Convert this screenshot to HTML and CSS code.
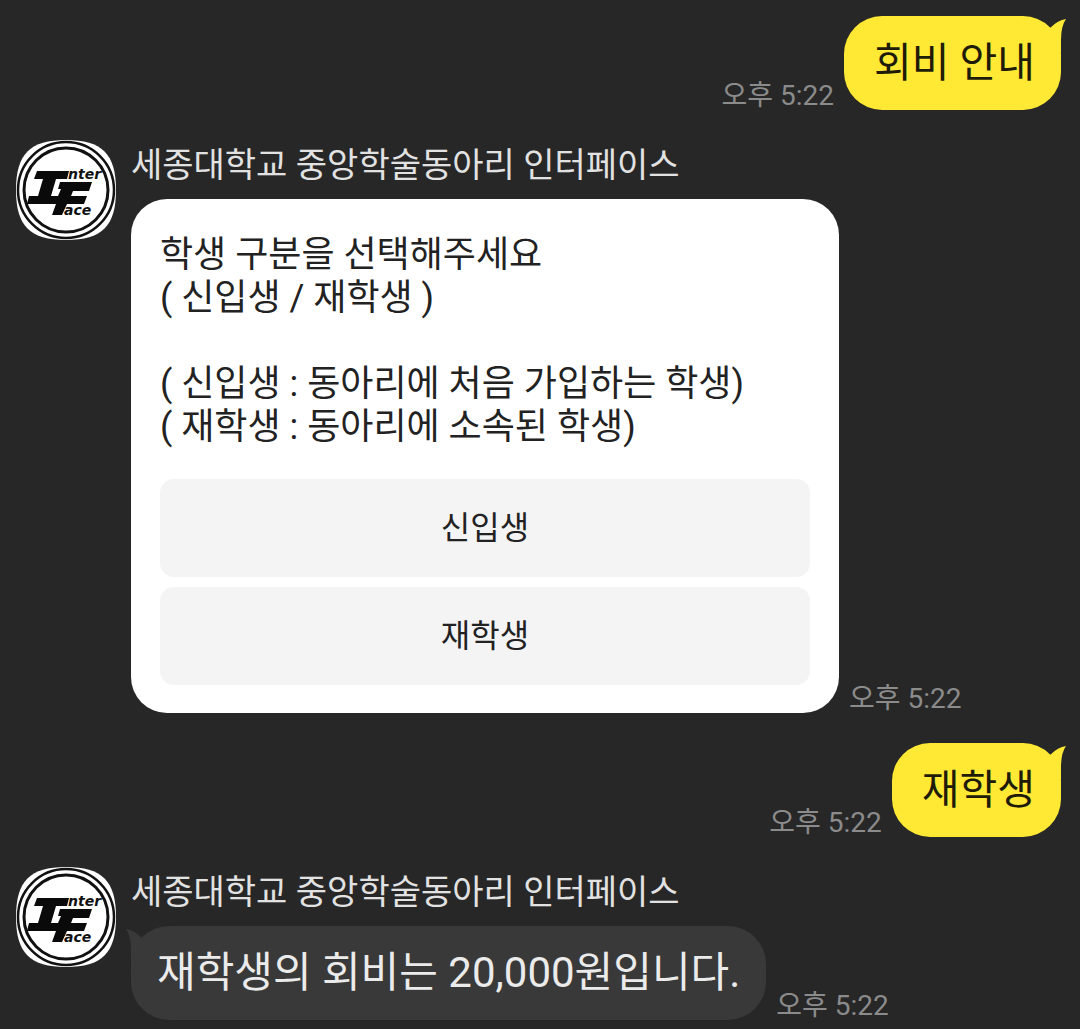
FILE: index.html
```html
<!DOCTYPE html>
<html lang="ko">
<head>
<meta charset="utf-8">
<meta name="viewport" content="width=device-width, initial-scale=1">
<title>세종대학교 중앙학술동아리 인터페이스</title>
<link rel="stylesheet" href="styles.css">
</head>
<body>
<svg class="defs" aria-hidden="true">
  <defs>
    <symbol id="logo" viewBox="0 0 100 100">
      <path d="M50 0C86 0 100 14 100 50S86 100 50 100 0 86 0 50 14 0 50 0Z" fill="#fff"/>
      <g fill="none" stroke="#111">
        <circle cx="50" cy="50" r="48" stroke-width="2.500"/>
        <circle cx="50" cy="50" r="42" stroke-width="3"/>
      </g>
      <path fill="#0a0a0a" d="M21 31H53L51 39H40L35 56H42L45 49H42L44 42H76L73 51H57L55 56H71L68 64H51L46 75H36L40 64H11L13 56H22L27 39H18Z"/>
      <g class="logo-text">
        <text x="52" y="39">nter</text>
        <text x="48" y="75">ace</text>
      </g>
    </symbol>
    <symbol id="tail" viewBox="0 0 24 36">
      <path d="M8 12Q16 4 24 3Q19 10 19 24V36H8Z"/>
    </symbol>
  </defs>
</svg>
<main class="chat">
  <section class="message mine">
    <time class="time">오후 5:22</time>
    <p class="bubble">회비 안내<svg class="tail" aria-hidden="true"><use href="#tail"/></svg></p>
  </section>

  <section class="message theirs">
    <svg class="avatar" aria-hidden="true"><use href="#logo"/></svg>
    <div class="content">
      <h2 class="name">세종대학교 중앙학술동아리 인터페이스</h2>
      <div class="line">
        <div class="card">
          <p class="card-text">학생 구분을 선택해주세요<br>( 신입생 / 재학생 )<br><br>( 신입생 : 동아리에 처음 가입하는 학생)<br>( 재학생 : 동아리에 소속된 학생)</p>
          <div class="choices">
            <button class="choice" type="button">신입생</button>
            <button class="choice" type="button">재학생</button>
          </div>
        </div>
        <time class="time">오후 5:22</time>
      </div>
    </div>
  </section>

  <section class="message mine">
    <time class="time">오후 5:22</time>
    <p class="bubble">재학생<svg class="tail" aria-hidden="true"><use href="#tail"/></svg></p>
  </section>

  <section class="message theirs">
    <svg class="avatar" aria-hidden="true"><use href="#logo"/></svg>
    <div class="content">
      <h2 class="name">세종대학교 중앙학술동아리 인터페이스</h2>
      <div class="line">
        <p class="bubble">재학생의 회비는 20,000원입니다.<svg class="tail" aria-hidden="true"><use href="#tail"/></svg></p>
        <time class="time">오후 5:22</time>
      </div>
    </div>
  </section>
</main>
</body>
</html>
```
FILE: styles.css
```css
* {
  box-sizing: border-box;
}

body {
  margin: 0;
  background: #272727;
  color: #e2e2e2;
  font-family: Roboto, "Noto Sans CJK KR", sans-serif;
}

h2,
p {
  margin: 0;
  font-weight: 400;
}

.defs {
  position: absolute;
  width: 0;
  height: 0;
}

.logo-text {
  fill: #111;
  font-family: "DejaVu Sans", sans-serif;
  font-size: 14px;
  font-style: italic;
  font-weight: 700;
}

.chat {
  display: flex;
  flex-direction: column;
  gap: 30px;
  padding: 16px 19px 8px 16px;
}

.message {
  display: flex;
}

.mine {
  justify-content: flex-end;
  align-items: flex-end;
  gap: 10px;
}

.theirs {
  align-items: flex-start;
  gap: 15px;
}

.content {
  flex: 1;
  min-width: 0;
}

.avatar {
  flex: none;
  width: 100px;
  height: 100px;
}

.name {
  margin-bottom: 9px;
  font-size: 34px;
  line-height: 50px;
}

.line {
  display: flex;
  align-items: flex-end;
  gap: 10px;
}

.time {
  flex: none;
  color: #8b8b8b;
  font-size: 28px;
  line-height: 28px;
}

.bubble {
  position: relative;
  border-radius: 38px;
  line-height: 64px;
}

.mine .bubble {
  padding: 15px 26px 15px 30px;
  background: #ffe934;
  color: #1e1c08;
  fill: #ffe934;
  font-size: 41px;
}

.theirs .bubble {
  padding: 15px 26px;
  background: #393939;
  color: #ebebeb;
  fill: #393939;
  font-size: 42px;
}

.tail {
  position: absolute;
  top: 0;
  right: -5px;
  width: 24px;
  height: 36px;
}

.theirs .tail {
  right: auto;
  left: -5px;
  transform: scaleX(-1);
}

.card {
  flex: 0 1 708px;
  padding: 35px 29px 28px;
  border-radius: 36px;
  background: #fff;
  color: #222;
}

.card-text {
  font-size: 36px;
  line-height: 43px;
}

.choices {
  display: grid;
  gap: 10px;
  margin-top: 30px;
}

.choice {
  padding: 25px 16px;
  border: 0;
  border-radius: 14px;
  background: #f4f4f4;
  color: #222;
  font-family: inherit;
  font-size: 32px;
  line-height: 48px;
}
```
